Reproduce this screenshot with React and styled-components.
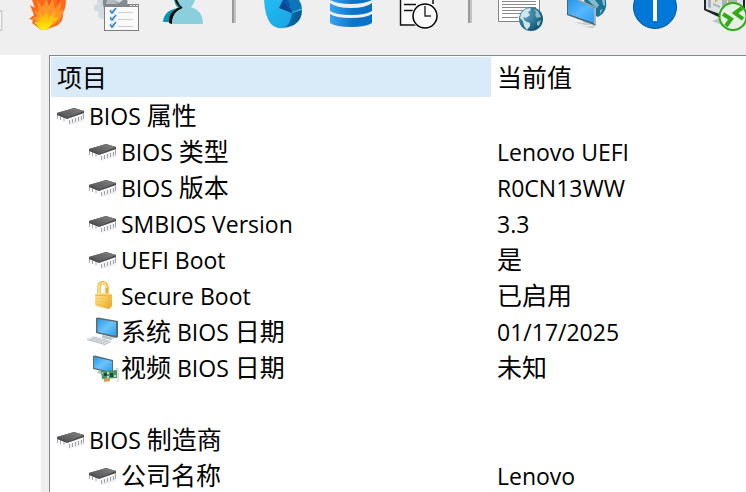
import React from 'react';
import styled, { createGlobalStyle } from 'styled-components';

const GlobalStyle = createGlobalStyle`
  * {
    box-sizing: border-box;
  }

  body {
    margin: 0;
    background: #efefef;
    color: #000;
    font-family: "Open Sans", "Noto Sans CJK SC", sans-serif;
  }
`;

const FireIcon = () => (
  <svg viewBox="0 0 48 32">
    <defs>
      <linearGradient id="fireInner" x1="0" y1="0" x2="0" y2="1">
        <stop offset="0%" stopColor="#ffa31a" />
        <stop offset="55%" stopColor="#ffc80c" />
        <stop offset="100%" stopColor="#fff200" />
      </linearGradient>
    </defs>
    <path d="M8 0L11 8L6 5L10 15L5 19L9 20L8 23L16 29Q20 31 24 29L34 25Q40 20 39 13Q42 8 42 0Z" fill="#ff6a1a" />
    <path d="M13 0L18 7L22 0H29L31 9L37 2L36 11L39 9Q39 18 33 22L25 28L16 28L12 24L12 21L8 19L13 16L10 10L15 12Z" fill="#ff9429" />
    <path d="M15 13L20 17L22 9L25 17L32 11L30 18L35 17L28 24L24 29Q19 31 16 29L10 22L16 22L13 18L17 19Z" fill="url(#fireInner)" />
    <path d="M23 0L25 6L28 0ZM33 0L33 5L37 0Z" fill="#f4591b" />
  </svg>
);

const PreferencesIcon = () => (
  <svg viewBox="0 0 48 32">
    <path d="M5 0H36V16H12V19L9 19L6 16L7 12L2 10V5L5 4Z" fill="#d3dbe2" />
    <path d="M11 0Q10 7 14 10V4H35Q36 2 35 0H31L27 3L22 0Z" fill="#858b91" />
    <path d="M15 0H22L26 4H14Z" fill="#b4bbc1" />
    <rect x="12.500" y="4.500" width="34" height="26" fill="#fafafa" stroke="#7c7f82" />
    <rect x="12" y="4" width="35" height="3" fill="#85888b" />
    <path d="M38 5h2v1h-2zM41 5h2v1h-2zM44 5h2v1h-2z" fill="#e4e4e4" />
    <path d="M18 9h5v5h-5zM18 16h5v5h-5zM18 23h5v5h-5z" fill="#d5e3ee" />
    <path d="M18 10.500l2 2.500l4-5M18 17.500l2 2.500l4-5M18 24.500l2 2.500l4-5" fill="none" stroke="#2d83cf" strokeWidth="1.500" />
    <path d="M26 12.500h15M26 19.500h15M26 26.500h15" stroke="#cfcfcf" />
  </svg>
);

const UsersIcon = () => (
  <svg viewBox="0 0 48 32">
    <path d="M14 0Q15 5 18 8Q4 10 3 22H9Q9 12 20 7L17 0Z" fill="#0097b2" />
    <path d="M15 0Q16 4 20 7Q8 12 9 23L12 24Q12 13 23 8L18 0Z" fill="#000" />
    <path d="M17 0Q19 5 23 8Q12 11 12 24H43Q43 11 31 7Q34 4 35 0Z" fill="#8bcedd" />
  </svg>
);

const PieIcon = () => (
  <svg viewBox="0 0 48 32">
    <defs>
      <linearGradient id="pieFace" x1="0" y1="0" x2="1" y2="1">
        <stop offset="0%" stopColor="#21bdf3" />
        <stop offset="100%" stopColor="#1aa3e2" />
      </linearGradient>
      <linearGradient id="pieSide" x1="0" y1="0" x2="1" y2="0">
        <stop offset="0%" stopColor="#0e79ba" />
        <stop offset="100%" stopColor="#03588c" />
      </linearGradient>
    </defs>
    <path d="M20 28Q28 28 34 25Q42 20 42 10L30 8Z" fill="url(#pieSide)" />
    <path d="M4 0Q5 17 11 24Q16 29 23 28Q31 25 32 13L19 8L23 0Z" fill="url(#pieFace)" />
    <path d="M23 0L19 8L32 13L29 0Z" fill="#0758ad" />
    <path d="M23 0L32 13L19 8Z" fill="#0a4693" />
    <path d="M28 0L32 12L42 9Q42 4 39 0Z" fill="#0f74b8" />
    <path d="M32 12L42 8.500V10L32 13Z" fill="#43b9ec" />
  </svg>
);

const DatabaseIcon = () => (
  <svg viewBox="0 0 48 32">
    <defs>
      <linearGradient id="dbBlue" x1="0" y1="0" x2="1" y2="0">
        <stop offset="0%" stopColor="#37a2f2" />
        <stop offset="55%" stopColor="#0b76c8" />
        <stop offset="100%" stopColor="#0670c6" />
      </linearGradient>
    </defs>
    <path d="M2 0H44Q36 4 23 4Q9 4 2 0Z" fill="url(#dbBlue)" />
    <path d="M2 3Q8 8 23 8Q38 8 44 3V11Q38 15 23 15Q8 15 2 11Z" fill="url(#dbBlue)" />
    <path d="M2 14Q8 18 23 18Q38 18 44 14V23Q38 27 23 27Q8 27 2 23Z" fill="url(#dbBlue)" />
  </svg>
);

const ScheduleIcon = () => (
  <svg viewBox="0 0 48 32">
    <path d="M3 0H37V14H28V26H3Z" fill="#fafafa" />
    <path d="M4.500 0V25H20M37 0V4M8 4.500H20M8 10.500H17" fill="none" stroke="#111" strokeWidth="1.500" />
    <circle cx="29" cy="16" r="13.500" fill="#fff" />
    <circle cx="29" cy="16" r="12" fill="#fafafa" stroke="#000" strokeWidth="1.500" />
    <path d="M29 6V16H35" fill="none" stroke="#333" strokeWidth="1.500" />
  </svg>
);

const WebReportIcon = () => (
  <svg viewBox="0 0 48 32">
    <defs>
      <radialGradient id="reportGlobe" cx="0.3" cy="0.3" r="0.8">
        <stop offset="0%" stopColor="#5aa5c4" />
        <stop offset="100%" stopColor="#08516d" />
      </radialGradient>
    </defs>
    <path d="M2.500 0V21.500H43.500V0" fill="#fff" stroke="#858585" />
    <path d="M6 1.500H40M6 4.500H40M6 7.500H40M6 10.500H40M6 13.500H40M6 17.500H22" stroke="#8a8a8a" />
    <circle cx="35" cy="19" r="12" fill="url(#reportGlobe)" />
    <path d="M25 14Q28 8 34 8L35 10L32 12L34 15L30 18L27 17L29 21L34 23L34 26L31 30L28 26L27 21L24 18Z" fill="#cfe5ed" />
    <path d="M38 9L42 11L45 17L41 18L39 15L40 13ZM41 22L45 20L43 26L41 25Z" fill="#8db9c9" />
  </svg>
);

const NetworkIcon = () => (
  <svg viewBox="0 0 48 32">
    <defs>
      <linearGradient id="netScreen" x1="0" y1="0" x2="1" y2="1">
        <stop offset="0%" stopColor="#2495e8" />
        <stop offset="50%" stopColor="#58b8ff" />
        <stop offset="100%" stopColor="#2b9df3" />
      </linearGradient>
    </defs>
    <path d="M20 0H42Q44 12 34 17L24 12Z" fill="#1b7396" />
    <path d="M24 0H31L35 5L33 8L28 4ZM38 0H41V6L39 5ZM36 10L39 9L36 14Z" fill="#86b9cc" />
    <path d="M19 18L26 20V23L33 25L29 28L21 27L9 23L14 22L19 23Z" fill="#c5ced3" />
    <path d="M10 23L22 26L29 25" fill="none" stroke="#fafafa" />
    <path d="M3 0H13L32 7V25L30 25L3 15Z" fill="#53636b" />
    <path d="M4 0H13L30 8V23L4 14Z" fill="url(#netScreen)" />
    <path d="M30 8L32 7V25L30 24Z" fill="#aab4b8" />
    <path d="M13 0H16L32 7L30 8Z" fill="#9aa7ad" />
  </svg>
);

const InfoIcon = () => (
  <svg viewBox="0 0 48 32">
    <circle cx="23" cy="7" r="21.500" fill="#0078d7" stroke="#07569a" />
    <rect x="21" width="4" height="21" fill="#fff" />
  </svg>
);

const RemoteIcon = () => (
  <svg viewBox="0 0 48 32">
    <path d="M4 0H45V14L31 23L4 10Z" fill="#20262b" />
    <path d="M6 0H43V11L31 18L6 9Z" fill="#dfe3e6" />
    <path d="M8 0H11V8L8 7ZM13 3L20 6V8L13 5ZM22 0H27V8L22 6ZM30 0H37V4H30Z" fill="#a9b2b8" />
    <path d="M15 0H18L15 3ZM28 0H30V4H28Z" fill="#dbad55" />
    <path d="M12 21L23 17L33 25L27 27Z" fill="#bcc5ca" />
    <circle cx="33" cy="16.500" r="13.500" fill="#e7efe7" stroke="#2cad14" strokeWidth="2" />
    <path d="M23 14L31 19L26 26M42 8L35 13L43 19" fill="none" stroke="#32aa18" strokeWidth="4" />
  </svg>
);

const EdgeIcon = () => (
  <svg viewBox="0 0 4 32">
    <path d="M0 10H2.500V31H0Z" fill="#cecece" />
    <path d="M0 12H1V29H0Z" fill="#f5f5f5" />
  </svg>
);

const ChipIcon = () => (
  <svg viewBox="0 0 32 32" aria-hidden="true">
    <defs>
      <linearGradient id="chipTop" x1="0" y1="1" x2="1" y2="0">
        <stop offset="0%" stopColor="#4b4b4b" />
        <stop offset="100%" stopColor="#858585" />
      </linearGradient>
    </defs>
    <path d="M0.500 13.500V18M3.500 15V19M7 16V20" stroke="#a6a6b0" />
    <path d="M11 17L27 12V20L12 24Z" fill="#efeff1" />
    <path d="M0 12L17 7L27 10V12L10 18L0 14Z" fill="#4a4a4c" />
    <path d="M0 12L17 7L27 10L10 17Z" fill="url(#chipTop)" />
    <path d="M12.500 17V23M15.500 16V22M18.500 15V21M21.500 14V20M24.500 13V19M26.500 12V18" stroke="#a4a4ae" />
    <path d="M12 17h2v2h-2zM15 16h2v2h-2zM18 15h2v2h-2zM21 14h2v2h-2zM24 13h2v2h-2z" fill="#f6f6f6" />
  </svg>
);

const LockIcon = () => (
  <svg viewBox="0 0 32 32" aria-hidden="true">
    <defs>
      <linearGradient id="lockBody" x1="0" y1="0" x2="1" y2="1">
        <stop offset="0%" stopColor="#ffe79c" />
        <stop offset="50%" stopColor="#f8cb57" />
        <stop offset="100%" stopColor="#df9e22" />
      </linearGradient>
    </defs>
    <path d="M10 16V7C9 0 18 0 18 7V15" fill="none" stroke="#e3b341" strokeWidth="3.500" />
    <path d="M10 16V7C9 1 17 0 17.500 7" fill="none" stroke="#ffdf82" strokeWidth="2" />
    <path d="M6 14L8 12L19 12L23 14V25L20 28L7 25L6 23Z" fill="url(#lockBody)" />
    <path d="M6 14L20 15L23 14M20 15V28" fill="none" stroke="#e9af3a" />
    <path d="M7 17L20 19M7 20L20 22M7 23L20 25" stroke="#efbb4c" strokeWidth="0.700" />
  </svg>
);

const ComputerIcon = () => (
  <svg viewBox="0 0 32 32" aria-hidden="true">
    <defs>
      <linearGradient id="pcScreen" x1="0" y1="0" x2="1" y2="1">
        <stop offset="0%" stopColor="#279be9" />
        <stop offset="50%" stopColor="#6cc3fb" />
        <stop offset="100%" stopColor="#2b9eeb" />
      </linearGradient>
    </defs>
    <path d="M13 18L17 19L25 21L22 23L13 21Z" fill="#b9c3c7" />
    <path d="M7 1L9 0.500L29 4V20L27 21L7 16Z" fill="#5b6a71" />
    <path d="M8.500 2L27 5V19L8.500 15Z" fill="url(#pcScreen)" />
    <path d="M-2 22L4 19L22 24L16 28Z" fill="#e7ebed" />
    <path d="M-2 22L16 27L22 24V25L16 28L-2 23Z" fill="#adb7be" />
    <path d="M0 22L17 26M2 21L19 25M4 20L20 24M3 23L8 20M7 24L12 21M11 25L16 22M14 26L19 23" stroke="#b7c1c7" strokeWidth="0.700" />
  </svg>
);

const VideoIcon = () => (
  <svg viewBox="0 0 32 32" aria-hidden="true">
    <path d="M9 18L13 18L15 22L8 20Z" fill="#b9c3c7" />
    <path d="M4 3L6 2.500L24 7V20L21 20L4 16Z" fill="#596b72" />
    <path d="M5 4L23 8V19L5 15Z" fill="url(#pcScreen)" />
    <path d="M12 18L28 17V25L13 26Z" fill="#4b9468" />
    <path d="M15 20h3v3h-3zM21 20h3v4h-3z" fill="#24483a" />
    <path d="M18 19h2v2h-2zM18 23h2v2h-2zM25 22h2v2h-2zM13 19h1v2h-1z" fill="#b6d6bd" />
    <path d="M15 26L21 25V28L15 29Z" fill="#d99a43" />
    <path d="M26 16L29 15.500V29" fill="none" stroke="#c2c7c9" />
  </svg>
);

const tools = [
  [
    { name: '收藏', icon: EdgeIcon, edge: true },
    { name: '压力测试', icon: FireIcon },
    { name: '首选项', icon: PreferencesIcon },
    { name: '用户', icon: UsersIcon },
  ],
  [
    { name: '统计', icon: PieIcon },
    { name: '数据库', icon: DatabaseIcon },
    { name: '计划', icon: ScheduleIcon },
  ],
  [
    { name: '网页报告', icon: WebReportIcon },
    { name: '网络', icon: NetworkIcon },
    { name: '信息', icon: InfoIcon },
    { name: '远程', icon: RemoteIcon },
  ],
];

const rows = [
  { icon: ChipIcon, label: 'BIOS 属性', level: 0 },
  { icon: ChipIcon, label: 'BIOS 类型', value: 'Lenovo UEFI', level: 1 },
  { icon: ChipIcon, label: 'BIOS 版本', value: 'R0CN13WW', level: 1 },
  { icon: ChipIcon, label: 'SMBIOS Version', value: '3.3', level: 1 },
  { icon: ChipIcon, label: 'UEFI Boot', value: '是', level: 1 },
  { icon: LockIcon, label: 'Secure Boot', value: '已启用', level: 1 },
  { icon: ComputerIcon, label: '系统 BIOS 日期', value: '01/17/2025', level: 1 },
  { icon: VideoIcon, label: '视频 BIOS 日期', value: '未知', level: 1 },
  {},
  { icon: ChipIcon, label: 'BIOS 制造商', level: 0 },
  { icon: ChipIcon, label: '公司名称', value: 'Lenovo', level: 1 },
];

// Chinese runs are set larger than Latin ones
const MixedText = ({ text = '' }) =>
  text
    .split(/([\u4e00-\u9fff]+)/)
    .filter(Boolean)
    .map((run, i) => (/[\u4e00-\u9fff]/.test(run) ? <Han key={i}>{run}</Han> : run));

const App = () => (
  <Window>
    <GlobalStyle />
    <Toolbar>
      {tools.map((group, i) => (
        <React.Fragment key={i}>
          {i > 0 && <Separator />}
          {group.map(({ name, icon: Icon, edge }) => (
            <ToolButton key={name} type="button" aria-label={name} $edge={edge}>
              <Icon />
            </ToolButton>
          ))}
        </React.Fragment>
      ))}
    </Toolbar>
    <Panes>
      <Sidebar />
      <ListPane>
        <Table>
          <thead>
            <tr>
              <HeadCell scope="col" $active>
                <MixedText text="项目" />
              </HeadCell>
              <HeadCell scope="col">
                <MixedText text="当前值" />
              </HeadCell>
            </tr>
          </thead>
          <tbody>
            {rows.map(({ icon: Icon, label, value, level }, i) => (
              <tr key={i}>
                <Cell>
                  {label && (
                    <Item $level={level}>
                      <ItemIcon>
                        <Icon />
                      </ItemIcon>
                      <Text>
                        <MixedText text={label} />
                      </Text>
                    </Item>
                  )}
                </Cell>
                <Cell>
                  <Text>
                    <MixedText text={value} />
                  </Text>
                </Cell>
              </tr>
            ))}
          </tbody>
        </Table>
      </ListPane>
    </Panes>
  </Window>
);

const Window = styled.div`
  display: flex;
  flex-direction: column;
  height: 100vh;
  overflow: hidden;
`;

const Toolbar = styled.div`
  display: flex;
  flex: none;
  gap: 20px;
  padding-bottom: 23px;
  overflow: hidden;
`;

const ToolButton = styled.button`
  flex: none;
  width: ${(props) => (props.$edge ? '4px' : '48px')};
  height: 32px;
  padding: 0;
  border: none;
  background: none;

  svg {
    display: block;
    width: 100%;
    height: 100%;
  }
`;

const Separator = styled.div`
  flex: none;
  width: 4px;
  height: 23px;
  margin: 0 4px;
  border-left: 2px solid #999;
  border-right: 2px solid #c3c3c3;
`;

const Panes = styled.div`
  display: flex;
  flex: 1;
  gap: 8px;
  min-height: 0;
`;

const Sidebar = styled.aside`
  flex: none;
  width: 41px;
  background: #fff;
`;

const ListPane = styled.main`
  flex: 1;
  min-width: 0;
  padding: 1px 0 0 1px;
  overflow: hidden;
  border-top: 1px solid #828790;
  border-left: 1px solid #828790;
  background: #fff;
`;

const Table = styled.table`
  width: 100%;
  table-layout: fixed;
  border-collapse: collapse;
  font-size: 23px;
  line-height: 30px;
  white-space: nowrap;

  thead::after {
    content: '';
    display: block;
    height: 2px;
  }
`;

const HeadCell = styled.th`
  width: ${(props) => (props.$active ? '440px' : 'auto')};
  height: 40px;
  padding: 2px 6px 0;
  background: ${(props) => (props.$active ? '#d9ebf9' : '#fff')};
  font-weight: 400;
  text-align: left;
`;

const Cell = styled.td`
  height: 36px;
  padding: 0 6px;
`;

const Item = styled.div`
  display: flex;
  align-items: center;
  padding-left: ${(props) => props.$level * 32}px;
`;

const ItemIcon = styled.span`
  flex: none;
  width: 32px;
  height: 32px;

  svg {
    display: block;
    width: 32px;
    height: 32px;
    overflow: visible;
  }
`;

const Text = styled.div`
  padding-bottom: 2px;
`;

const Han = styled.span`
  font-family: "Noto Sans CJK SC", sans-serif;
  font-size: 25px;
  font-weight: 400;
  line-height: 1;
`;

export default App;
